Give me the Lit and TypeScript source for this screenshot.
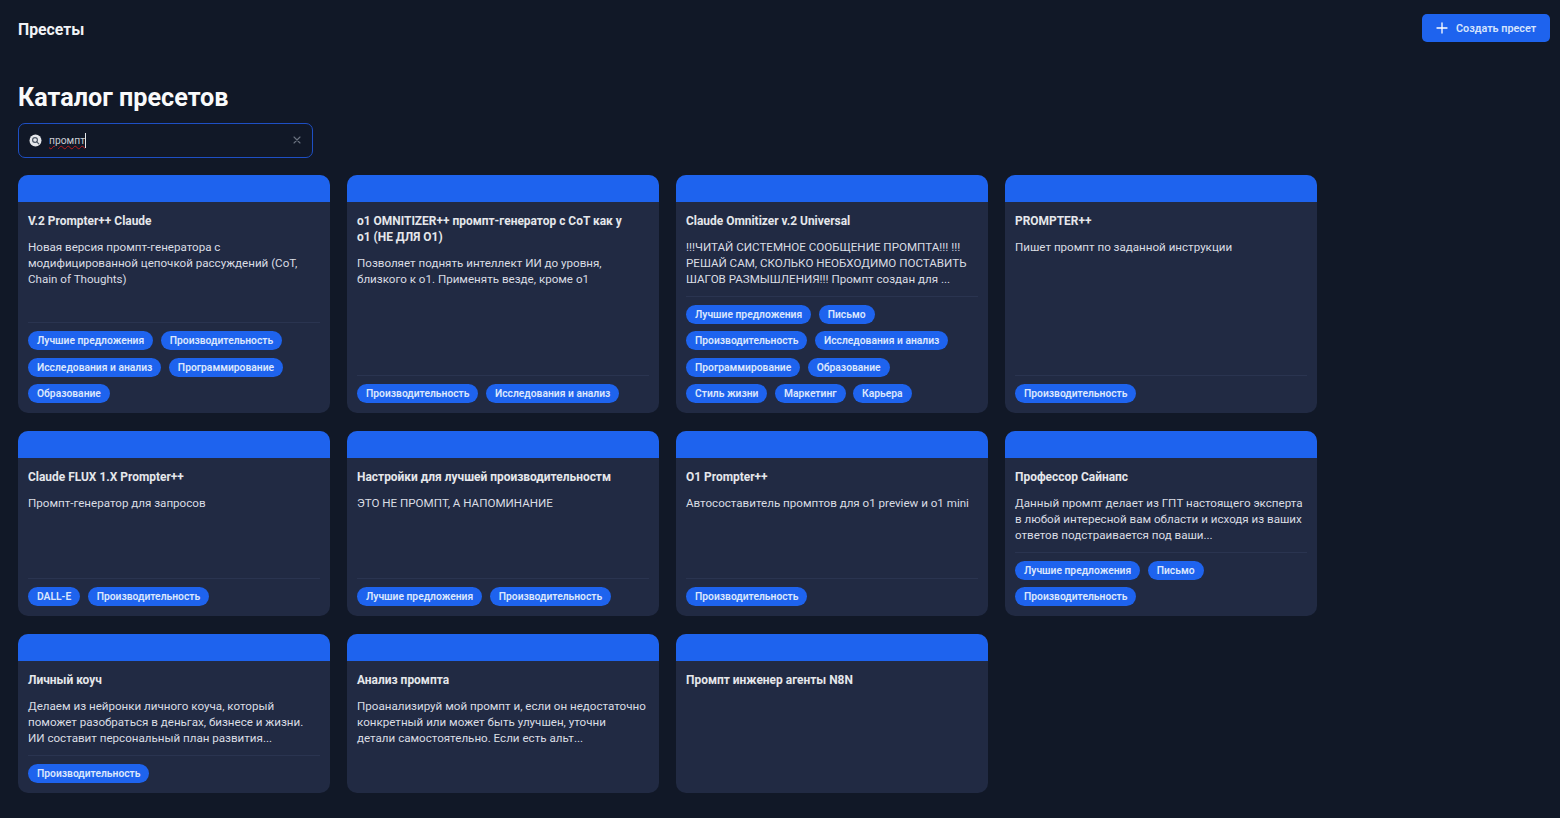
import { LitElement, html, css } from "lit";
import { customElement } from "lit/decorators.js";

interface Preset { title: string; desc?: string; tags?: string[] }
const L = "Лучшие предложения", P = "Производительность", I = "Исследования и анализ", G = "Программирование", O = "Образование", W = "Письмо";

const presets: Preset[] = [
  { title: "V.2 Prompter++ Claude", desc: "Новая версия промпт-генератора с модифицированной цепочкой рассуждений (CoT, Chain of Thoughts)", tags: [L, P, I, G, O] },
  { title: "o1 OMNITIZER++ промпт-генератор с CoT как у o1\u00a0(НЕ ДЛЯ O1)", desc: "Позволяет поднять интеллект ИИ до уровня, близкого к o1. Применять везде, кроме o1", tags: [P, I] },
  { title: "Claude Omnitizer v.2 Universal", desc: "!!!ЧИТАЙ СИСТЕМНОЕ СООБЩЕНИЕ ПРОМПТА!!! !!! РЕШАЙ САМ, СКОЛЬКО НЕОБХОДИМО ПОСТАВИТЬ ШАГОВ РАЗМЫШЛЕНИЯ!!! Промпт создан для ...", tags: [L, W, P, I, G, O, "Стиль жизни", "Маркетинг", "Карьера"] },
  { title: "PROMPTER++", desc: "Пишет промпт по заданной инструкции", tags: [P] },
  { title: "Claude FLUX 1.X Prompter++", desc: "Промпт-генератор для запросов", tags: ["DALL-E", P] },
  { title: "Настройки для лучшей производительностм", desc: "ЭТО НЕ ПРОМПТ, А НАПОМИНАНИЕ", tags: [L, P] },
  { title: "O1 Prompter++", desc: "Автосоставитель промптов для o1 preview и o1 mini", tags: [P] },
  { title: "Профессор Сайнапс", desc: "Данный промпт делает из ГПТ настоящего эксперта в любой интересной вам области и исходя из ваших ответов подстраивается под ваши...", tags: [L, W, P] },
  { title: "Личный коуч", desc: "Делаем из нейронки личного коуча, который поможет разобраться в деньгах, бизнесе и жизни. ИИ составит персональный план развития...", tags: [P] },
  { title: "Анализ промпта", desc: "Проанализируй мой промпт и, если он недостаточно конкретный или может быть улучшен, уточни детали\u00a0самостоятельно. Если есть альт..." },
  { title: "Промпт инженер агенты N8N" },
];

@customElement("app-root")
export class AppRoot extends LitElement {
  static styles = css`
    :host {
      display: block;
      min-height: 818px;
      box-sizing: border-box;
      background: #111827;
      color: #f3f4f6;
      font-family: Roboto, "Noto Sans", sans-serif;
      padding: 14px 10px 0 18px;
    }
    .top { display: flex; justify-content: space-between; align-items: center; height: 28px; }
    .top h2 { margin: 0; padding-top: 3px; font-size: 15.8px; font-weight: 700; color: #f1f3f6; }
    .create {
      display: flex; align-items: center; gap: 8px; box-sizing: border-box;
      width: 128px; height: 28px; padding: 0 0 0 14px;
      background: #1e63ee; border: 0; border-radius: 5px;
      color: #d6e3fc; font: 600 10.8px Roboto, sans-serif;
    }
    .create svg { width: 12px; height: 12px; flex: none; }
    h1 { margin: 41px 0 0; font-size: 25.2px; line-height: 30px; font-weight: 700; color: #f9fafb; }
    .search {
      box-sizing: border-box; display: flex; align-items: center;
      width: 295px; height: 35px; margin-top: 10px; padding: 0 11px 0 10px;
      border: 1px solid #1e4fc4; border-radius: 7px; background: #111827;
    }
    .search svg.glass { width: 13px; height: 13px; flex: none; margin-right: 7px; }
    .query {
      font-size: 10.3px; color: #c9ccd3;
      text-decoration: underline wavy #b91c1c 1px; text-underline-offset: 1px;
      border-right: 1px solid #e5e7eb; line-height: 15px;
    }
    .search svg.clear { width: 8px; height: 8px; margin: -1px 0 0 auto; }
    .grid {
      display: grid; grid-template-columns: repeat(4, 311.5px);
      column-gap: 17.5px; row-gap: 18px; margin-top: 17px;
    }
    .card {
      display: flex; flex-direction: column; overflow: hidden;
      background: #212a43; border-radius: 10px;
    }
    .bar { height: 27px; background: #1e63ee; flex: none; }
    .body { flex: 1; display: flex; flex-direction: column; padding: 11px 10px 10px; }
    .title { font-size: 11.95px; line-height: 16px; font-weight: 700; color: #e5e7eb; }
    .desc { margin-top: 10px; font-size: 11.6px; line-height: 16px; color: #dadde3; }
    .foot { margin-top: auto; padding-top: 9px; }
    .tags {
      display: flex; flex-wrap: wrap; gap: 7.33px 7.5px;
      border-top: 1px solid #2a3450; padding-top: 8px;
    }
    .tag {
      height: 19px; line-height: 19.5px; padding: 0 9px; border-radius: 10px;
      background: #1e63ee; color: #dbe7fd; font-size: 10.3px; font-weight: 600; white-space: nowrap;
    }
  `;

  render() {
    return html`
      <div class="top">
        <h2>Пресеты</h2>
        <button class="create">
          <svg viewBox="0 0 12 12" fill="none" stroke="#fff" stroke-width="1.3" stroke-linecap="round"><path d="M6 1v10M1 6h10"/></svg>
          Создать пресет
        </button>
      </div>
      <h1>Каталог пресетов</h1>
      <div class="search">
        <svg class="glass" viewBox="0 0 13 13">
          <circle cx="6.5" cy="6.5" r="6" fill="#e5e7eb"/>
          <circle cx="6" cy="6" r="2.4" fill="none" stroke="#4b5563" stroke-width="1.2"/>
          <path d="M7.8 7.8l2 2" stroke="#4b5563" stroke-width="1.2" stroke-linecap="round"/>
        </svg>
        <span class="query">промпт</span>
        <svg class="clear" viewBox="0 0 8 8" stroke="#6b7280" stroke-width="1.1" stroke-linecap="round"><path d="M1 1l6 6M7 1L1 7"/></svg>
      </div>
      <div class="grid">
        ${presets.map(p => html`
          <div class="card">
            <div class="bar"></div>
            <div class="body">
              <div class="title">${p.title}</div>
              ${p.desc ? html`<div class="desc">${p.desc}</div>` : ""}
              ${p.tags ? html`<div class="foot"><div class="tags">${p.tags.map(t => html`<span class="tag">${t}</span>`)}</div></div>` : ""}
            </div>
          </div>`)}
      </div>
    `;
  }
}
